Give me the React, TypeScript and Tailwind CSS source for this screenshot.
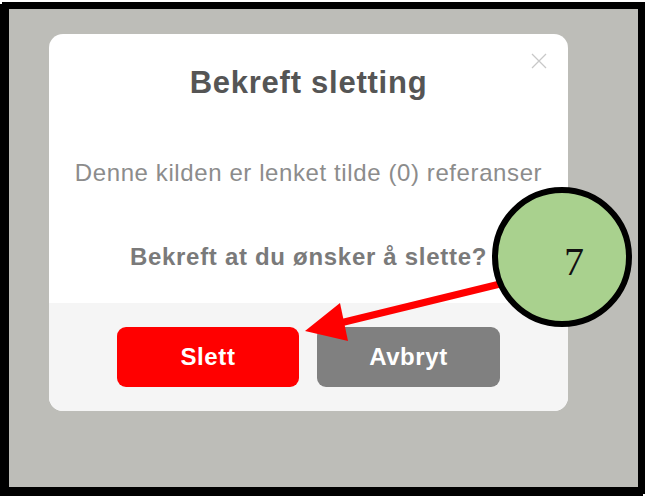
import React from 'react';

const Annotation: React.FC = () => (
  <svg className="absolute left-0 top-0 pointer-events-none" width={648} height={498} viewBox="0 0 648 498">
    <line x1={500} y1={284} x2={332} y2={325} stroke="#ff0000" strokeWidth={7} />
    <polygon points="305,331 340,303 348,341" fill="#ff0000" />
    <circle cx={562} cy={257} r={67} fill="#a9d18e" stroke="#000" strokeWidth={6} />
    <text x={574} y={275} textAnchor="middle" fontFamily="'Liberation Serif', serif" fontSize={40} fill="#111">
      7
    </text>
  </svg>
);

export default function App() {
  return (
    <div className="relative w-[648px] h-[498px] bg-white overflow-hidden font-['Liberation_Sans',Arial,sans-serif]">
      <div className="ml-[2px] mt-[2px] w-[643px] h-[492px] border-[7px] border-black bg-[#bdbdb8] pl-[40px] pt-[25px] shadow-[-2px_2px_0_#000]">
        <div className="w-[519px] h-[377px] rounded-[14px] bg-white overflow-hidden flex flex-col">
          <div className="relative h-[269px] flex flex-col items-center">
            <button className="absolute right-[21px] top-[19px] text-[#c8c8c8]">
              <svg width={16} height={16} viewBox="0 0 16 16">
                <path d="M1 1L15 15M15 1L1 15" stroke="currentColor" strokeWidth={1.3} />
              </svg>
            </button>
            <h2 className="mt-[31px] text-[31px] leading-[36px] font-bold tracking-[0.75px] text-[#555]">
              Bekreft sletting
            </h2>
            <p className="mt-[58px] text-[24px] leading-[28px] tracking-[0.6px] text-[#8c8c8c]">
              Denne kilden er lenket tilde (0) referanser
            </p>
            <p className="mt-[56px] text-[24px] leading-[28px] font-bold tracking-[0.7px] text-[#7a7a7a]">
              Bekreft at du ønsker å slette?
            </p>
          </div>
          <div className="h-[108px] bg-[#f5f5f5] flex items-center justify-center gap-[18px]">
            <button className="w-[182px] h-[60px] rounded-[9px] bg-[#ff0000] text-white font-bold text-[24px] tracking-[0.6px]">
              Slett
            </button>
            <button className="w-[183px] h-[60px] rounded-[9px] bg-[#808080] text-white font-bold text-[24px] tracking-[0.6px]">
              Avbryt
            </button>
          </div>
        </div>
      </div>
      <Annotation />
    </div>
  );
}
